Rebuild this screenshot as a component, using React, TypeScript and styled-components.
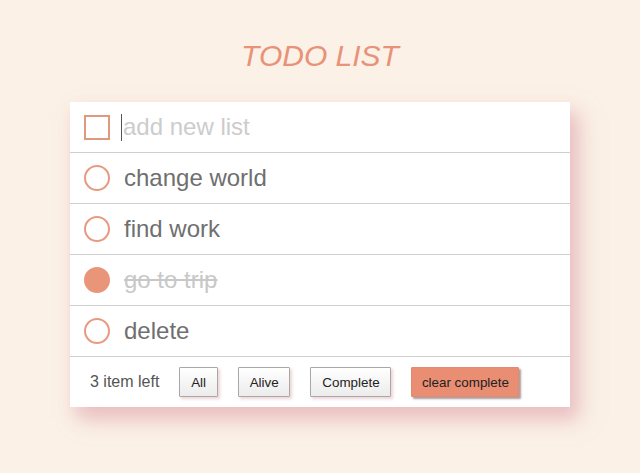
import React from "react";
import styled, { createGlobalStyle } from "styled-components";

const Global = createGlobalStyle`
  html, body { margin: 0; padding: 0; }
  body { background: #fbf1e6; font-family: "Liberation Sans", Arial, sans-serif; }
`;

const Page = styled.div`
  display: flex;
  flex-direction: column;
  align-items: center;
  padding-top: 39px;
  padding-bottom: 40px;
`;

const Title = styled.h1`
  margin: 0 0 29px;
  font-family: "Liberation Sans", Arial, sans-serif;
  font-style: italic;
  font-weight: normal;
  font-size: 30px;
  line-height: 34px;
  color: #e8927a;
`;

const Card = styled.div`
  width: 500px;
  background: #fff;
  box-shadow: 10px 12px 20px rgba(226, 170, 178, 0.55), 4px 10px 14px rgba(226, 170, 178, 0.35);
`;

const Row = styled.div`
  display: flex;
  align-items: center;
  height: 50px;
  padding-left: 14px;
  border-bottom: 1px solid #cfcfcf;
  box-sizing: content-box;
`;

const Square = styled.span`
  width: 22px;
  height: 21px;
  border: 2px solid #e0997f;
  flex: none;
`;

const Circle = styled.span<{ $done?: boolean }>`
  width: 22px;
  height: 22px;
  border-radius: 50%;
  border: 2px solid #e89a80;
  background: ${(p) => (p.$done ? "#e9957a" : "transparent")};
  ${(p) => (p.$done ? "border-color: #e9957a;" : "")}
  flex: none;
`;

const Input = styled.div`
  margin-left: 11px;
  display: flex;
  align-items: center;
  font-size: 24px;
  color: #cccccc;
`;

const Caret = styled.span`
  display: inline-block;
  width: 1px;
  height: 27px;
  background: #555;
  margin-right: 1px;
`;

const Label = styled.span<{ $done?: boolean }>`
  margin-left: 14px;
  font-size: 24px;
  color: ${(p) => (p.$done ? "#c8c8c8" : "#6f6f6f")};
  text-decoration: ${(p) => (p.$done ? "line-through" : "none")};
`;

const Footer = styled.div`
  display: flex;
  align-items: center;
  height: 50px;
  padding-left: 20px;
  font-size: 16px;
  color: #555;
`;

const Count = styled.span`
  margin-right: 20px;
`;

const Btn = styled.button<{ $accent?: boolean }>`
  height: 30px;
  padding: 0 ${(p) => (p.$accent ? "9.5px" : "10.8px")};
  margin-right: 20px;
  font-family: "Liberation Sans", Arial, sans-serif;
  font-size: 13.4px;
  color: #222;
  border: 1px solid ${(p) => (p.$accent ? "#e38b70" : "#a8a8a8")};
  border-radius: 1px;
  background: ${(p) => (p.$accent ? "#e98d73" : "linear-gradient(#ffffff, #ececec)")};
  box-shadow: ${(p) => (p.$accent ? "2px 2px 2px rgba(120, 90, 90, 0.6)" : "2px 2px 3px rgba(220, 170, 175, 0.5)")};
  cursor: pointer;
`;

const items = [
  { text: "change world", done: false },
  { text: "find work", done: false },
  { text: "go to trip", done: true },
  { text: "delete", done: false },
];

export default function App() {
  return (
    <Page>
      <Global />
      <Title>TODO LIST</Title>
      <Card>
        <Row>
          <Square />
          <Input>
            <Caret />
            add new list
          </Input>
        </Row>
        {items.map((it) => (
          <Row key={it.text}>
            <Circle $done={it.done} />
            <Label $done={it.done}>{it.text}</Label>
          </Row>
        ))}
        <Footer>
          <Count>3 item left</Count>
          <Btn>All</Btn>
          <Btn>Alive</Btn>
          <Btn>Complete</Btn>
          <Btn $accent>clear complete</Btn>
        </Footer>
      </Card>
    </Page>
  );
}
